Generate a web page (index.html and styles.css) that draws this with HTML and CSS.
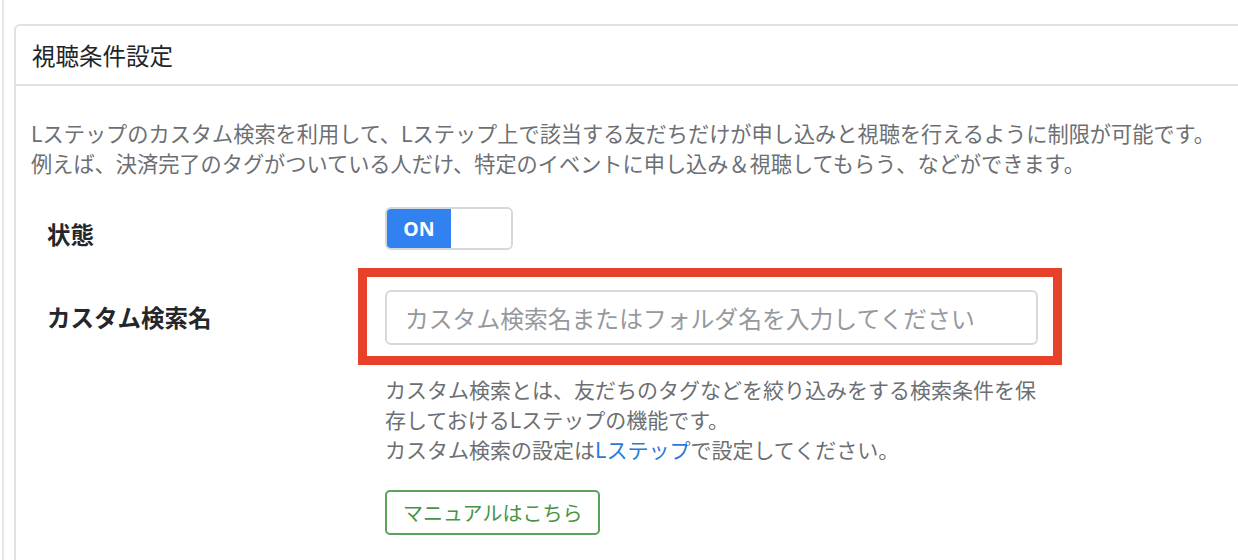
FILE: index.html
```html
<!DOCTYPE html>
<html lang="ja">
<head>
<meta charset="utf-8">
<title>視聴条件設定</title>
<link rel="stylesheet" href="styles.css">
</head>
<body>
<div class="page">
  <div class="card">
    <div class="card-header">視聴条件設定</div>
    <div class="card-body">
      <p class="desc">Lステップのカスタム検索を利用して、Lステップ上で該当する友だちだけが申し込みと視聴を行えるように制限が可能です。<br>例えば、決済完了のタグがついている人だけ、特定のイベントに申し込み＆視聴してもらう、などができます。</p>
      <div class="form-row row-status">
        <label class="form-label">状態</label>
        <div class="form-field">
          <div class="toggle"><span class="toggle-on">ON</span><span class="toggle-off"></span></div>
        </div>
      </div>
      <div class="form-row row-search">
        <label class="form-label">カスタム検索名</label>
        <div class="form-field">
          <div class="input-wrap">
            <input class="text-input" type="text" placeholder="カスタム検索名またはフォルダ名を入力してください">
            <div class="highlight"></div>
          </div>
          <p class="help">カスタム検索とは、友だちのタグなどを絞り込みをする検索条件を保存しておけるLステップの機能です。<br>カスタム検索の設定は<a class="link" href="#">Lステップ</a>で設定してください。</p>
          <button class="manual-btn" type="button">マニュアルはこちら</button>
        </div>
      </div>
    </div>
  </div>
</div>
</body>
</html>
```

FILE: styles.css
```css
html, body {
  margin: 0;
  padding: 0;
  background: #ffffff;
  overflow: hidden;
}
body {
  font-family: "Noto Sans CJK JP", "Noto Sans", sans-serif;
  color: #212529;
  width: 1238px;
  height: 560px;
}
.page {
  margin-left: 2px;
  border-left: 2px solid #e6e6e6;
  padding: 24px 0 0 10px;
  height: 560px;
  box-sizing: border-box;
}
.card {
  border: 2px solid #e2e2e2;
  border-right: none;
  border-bottom: none;
  border-radius: 6px 0 0 0;
  background: #fff;
}
.card-header {
  height: 58px;
  display: flex;
  align-items: center;
  padding-left: 16px;
  font-size: 23.5px;
  color: #212529;
  border-bottom: 2px solid #e2e2e2;
}
.card-body {
  padding: 32px 0 40px 15px;
}
.desc {
  margin: 0;
  font-size: 21.2px;
  line-height: 30px;
  color: #6c6f73;
  white-space: nowrap;
}
.form-row {
  display: flex;
  align-items: flex-start;
}
.row-status {
  margin-top: 29px;
}
.row-search {
  margin-top: 39px;
}
.form-label {
  width: 338px;
  padding-left: 16px;
  padding-top: 10px;
  font-size: 23.5px;
  line-height: 34px;
  font-weight: 700;
  color: #23272b;
}
.form-field {
  display: flex;
  flex-direction: column;
  align-items: flex-start;
}
.toggle {
  display: flex;
  width: 128px;
  height: 43px;
  box-sizing: border-box;
  border: 2px solid #d4d7db;
  border-radius: 6px;
  overflow: hidden;
}
.toggle-on {
  width: 64px;
  background: #3182f0;
  color: #fff;
  font-family: "Noto Sans", sans-serif;
  font-weight: 700;
  font-size: 19.5px;
  display: flex;
  align-items: center;
  justify-content: center;
}
.toggle-off {
  flex: 1;
  background: #fff;
}
.input-wrap {
  position: relative;
}
.text-input {
  display: block;
  width: 653px;
  height: 55px;
  box-sizing: border-box;
  border: 2px solid #d6d9dc;
  border-radius: 6px;
  padding: 0 18px;
  font-family: "Noto Sans CJK JP", "Noto Sans", sans-serif;
  font-size: 23.8px;
  color: #212529;
  background: #fff;
  outline: none;
}
.text-input::placeholder {
  color: #95999e;
}
.highlight {
  position: absolute;
  left: -27px;
  top: -22px;
  width: 704px;
  height: 97px;
  box-sizing: border-box;
  border: 9px solid #e8412a;
  pointer-events: none;
}
.help {
  margin: 29px 0 0;
  width: 653px;
  font-size: 21px;
  line-height: 30px;
  color: #6c6f73;
}
.link {
  color: #2a78d8;
  text-decoration: none;
}
.manual-btn {
  margin-top: 26px;
  height: 45px;
  padding: 0 16px;
  border: 2px solid #5ba35b;
  border-radius: 5px;
  background: #fff;
  color: #479347;
  font-family: "Noto Sans CJK JP", "Noto Sans", sans-serif;
  font-size: 20px;
  line-height: 41px;
}
```
